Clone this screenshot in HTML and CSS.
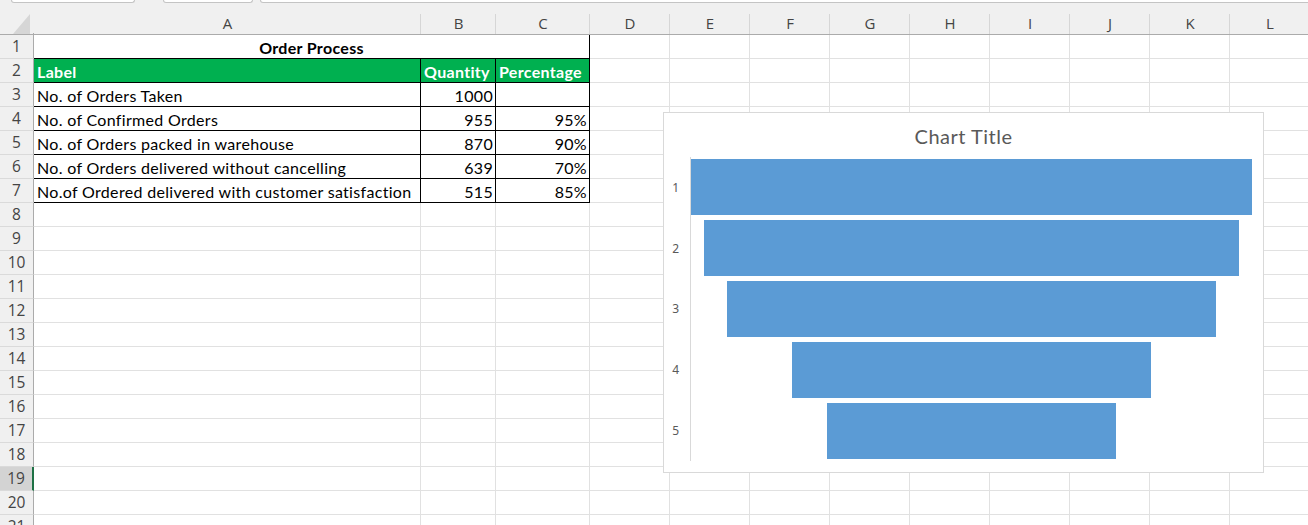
FILE: index.html
```html
<!DOCTYPE html>
<html>
<head>
<meta charset="utf-8">
<link rel="stylesheet" href="styles.css">
</head>
<body>
<div class="topbar">
  <div class="box b1"></div>
  <div class="box b2"></div>
  <div class="box b3"></div>
</div>
<div class="sheet">
  <div class="row hdr">
    <div class="hc corner"><svg class="tri" width="18" height="20" viewBox="0 0 18 20"><polygon points="17,0 17,20 0,20" fill="#d6d6d6"/></svg></div>
    <div class="hc">A</div><div class="hc">B</div><div class="hc">C</div><div class="hc">D</div>
    <div class="hc">E</div><div class="hc">F</div><div class="hc">G</div><div class="hc">H</div>
    <div class="hc">I</div><div class="hc">J</div><div class="hc">K</div><div class="hc">L</div>
  </div>
  <div class="row">
    <div class="rh">1</div>
    <div class="c t title">Order Process</div>
    <div class="c"></div><div class="c"></div><div class="c"></div><div class="c"></div><div class="c"></div><div class="c"></div><div class="c"></div><div class="c"></div><div class="c"></div>
  </div>
  <div class="row">
    <div class="rh">2</div>
    <div class="c t g">Label</div><div class="c t g">Quantity</div><div class="c t g">Percentage</div>
    <div class="c"></div><div class="c"></div><div class="c"></div><div class="c"></div><div class="c"></div><div class="c"></div><div class="c"></div><div class="c"></div><div class="c"></div>
  </div>
  <div class="row">
    <div class="rh">3</div>
    <div class="c t">No. of Orders Taken</div><div class="c t n">1000</div><div class="c t n"></div>
    <div class="c"></div><div class="c"></div><div class="c"></div><div class="c"></div><div class="c"></div><div class="c"></div><div class="c"></div><div class="c"></div><div class="c"></div>
  </div>
  <div class="row">
    <div class="rh">4</div>
    <div class="c t">No. of Confirmed Orders</div><div class="c t n">955</div><div class="c t n">95%</div>
    <div class="c"></div><div class="c"></div><div class="c"></div><div class="c"></div><div class="c"></div><div class="c"></div><div class="c"></div><div class="c"></div><div class="c"></div>
  </div>
  <div class="row">
    <div class="rh">5</div>
    <div class="c t">No. of Orders packed in warehouse</div><div class="c t n">870</div><div class="c t n">90%</div>
    <div class="c"></div><div class="c"></div><div class="c"></div><div class="c"></div><div class="c"></div><div class="c"></div><div class="c"></div><div class="c"></div><div class="c"></div>
  </div>
  <div class="row">
    <div class="rh">6</div>
    <div class="c t">No. of Orders delivered without cancelling</div><div class="c t n">639</div><div class="c t n">70%</div>
    <div class="c"></div><div class="c"></div><div class="c"></div><div class="c"></div><div class="c"></div><div class="c"></div><div class="c"></div><div class="c"></div><div class="c"></div>
  </div>
  <div class="row">
    <div class="rh">7</div>
    <div class="c t">No.of Ordered delivered with customer satisfaction</div><div class="c t n">515</div><div class="c t n">85%</div>
    <div class="c"></div><div class="c"></div><div class="c"></div><div class="c"></div><div class="c"></div><div class="c"></div><div class="c"></div><div class="c"></div><div class="c"></div>
  </div>
  <div class="row"><div class="rh">8</div><div class="c"></div><div class="c"></div><div class="c"></div><div class="c"></div><div class="c"></div><div class="c"></div><div class="c"></div><div class="c"></div><div class="c"></div><div class="c"></div><div class="c"></div><div class="c"></div></div>
  <div class="row"><div class="rh">9</div><div class="c"></div><div class="c"></div><div class="c"></div><div class="c"></div><div class="c"></div><div class="c"></div><div class="c"></div><div class="c"></div><div class="c"></div><div class="c"></div><div class="c"></div><div class="c"></div></div>
  <div class="row"><div class="rh">10</div><div class="c"></div><div class="c"></div><div class="c"></div><div class="c"></div><div class="c"></div><div class="c"></div><div class="c"></div><div class="c"></div><div class="c"></div><div class="c"></div><div class="c"></div><div class="c"></div></div>
  <div class="row"><div class="rh">11</div><div class="c"></div><div class="c"></div><div class="c"></div><div class="c"></div><div class="c"></div><div class="c"></div><div class="c"></div><div class="c"></div><div class="c"></div><div class="c"></div><div class="c"></div><div class="c"></div></div>
  <div class="row"><div class="rh">12</div><div class="c"></div><div class="c"></div><div class="c"></div><div class="c"></div><div class="c"></div><div class="c"></div><div class="c"></div><div class="c"></div><div class="c"></div><div class="c"></div><div class="c"></div><div class="c"></div></div>
  <div class="row"><div class="rh">13</div><div class="c"></div><div class="c"></div><div class="c"></div><div class="c"></div><div class="c"></div><div class="c"></div><div class="c"></div><div class="c"></div><div class="c"></div><div class="c"></div><div class="c"></div><div class="c"></div></div>
  <div class="row"><div class="rh">14</div><div class="c"></div><div class="c"></div><div class="c"></div><div class="c"></div><div class="c"></div><div class="c"></div><div class="c"></div><div class="c"></div><div class="c"></div><div class="c"></div><div class="c"></div><div class="c"></div></div>
  <div class="row"><div class="rh">15</div><div class="c"></div><div class="c"></div><div class="c"></div><div class="c"></div><div class="c"></div><div class="c"></div><div class="c"></div><div class="c"></div><div class="c"></div><div class="c"></div><div class="c"></div><div class="c"></div></div>
  <div class="row"><div class="rh">16</div><div class="c"></div><div class="c"></div><div class="c"></div><div class="c"></div><div class="c"></div><div class="c"></div><div class="c"></div><div class="c"></div><div class="c"></div><div class="c"></div><div class="c"></div><div class="c"></div></div>
  <div class="row"><div class="rh">17</div><div class="c"></div><div class="c"></div><div class="c"></div><div class="c"></div><div class="c"></div><div class="c"></div><div class="c"></div><div class="c"></div><div class="c"></div><div class="c"></div><div class="c"></div><div class="c"></div></div>
  <div class="row"><div class="rh">18</div><div class="c"></div><div class="c"></div><div class="c"></div><div class="c"></div><div class="c"></div><div class="c"></div><div class="c"></div><div class="c"></div><div class="c"></div><div class="c"></div><div class="c"></div><div class="c"></div></div>
  <div class="row"><div class="rh sel">19</div><div class="c"></div><div class="c"></div><div class="c"></div><div class="c"></div><div class="c"></div><div class="c"></div><div class="c"></div><div class="c"></div><div class="c"></div><div class="c"></div><div class="c"></div><div class="c"></div></div>
  <div class="row"><div class="rh">20</div><div class="c"></div><div class="c"></div><div class="c"></div><div class="c"></div><div class="c"></div><div class="c"></div><div class="c"></div><div class="c"></div><div class="c"></div><div class="c"></div><div class="c"></div><div class="c"></div></div>
  <div class="row"><div class="rh">21</div><div class="c"></div><div class="c"></div><div class="c"></div><div class="c"></div><div class="c"></div><div class="c"></div><div class="c"></div><div class="c"></div><div class="c"></div><div class="c"></div><div class="c"></div><div class="c"></div></div>
</div>

<div class="chart">
  <div class="ctitle">Chart Title</div>
  <div class="plot">
    <div class="labels">
      <div class="lab">1</div><div class="lab">2</div><div class="lab">3</div><div class="lab">4</div><div class="lab">5</div>
    </div>
    <div class="bars">
      <div class="band"><div class="bar" style="width:100%"></div></div>
      <div class="band"><div class="bar" style="width:95.5%"></div></div>
      <div class="band"><div class="bar" style="width:87%"></div></div>
      <div class="band"><div class="bar" style="width:63.9%"></div></div>
      <div class="band"><div class="bar" style="width:51.5%"></div></div>
    </div>
  </div>
</div>
</body>
</html>
```
FILE: styles.css
```css
html, body {
  margin: 0;
  padding: 0;
}
body {
  position: relative;
  width: 1308px;
  height: 525px;
  overflow: hidden;
  background: #fff;
  font-family: Lato, "Liberation Sans", sans-serif;
}

/* top strip (bottom edges of the ribbon boxes) */
.topbar {
  height: 3px;
  background: #f0f0f0;
  display: flex;
  padding-left: 11px;
  overflow: hidden;
}
.box {
  height: 2px;
  background: #fff;
  border: 1px solid #c4c4c4;
  border-top: none;
  border-radius: 0 0 4px 4px;
  flex-shrink: 0;
}
.b1 { width: 122px; }
.b2 { width: 88px; margin-left: 28px; }
.b3 { width: 1100px; margin-left: 7px; }

/* grid */
.row {
  display: grid;
  grid-template-columns: 34px 387px 75px 94px 80px repeat(8, 80px);
  height: 24px;
}
.row.hdr {
  height: 32px;
}
.hc {
  position: relative;
  background: #f0f0f0;
  border-bottom: 1px solid #ababab;
  box-sizing: border-box;
  display: flex;
  justify-content: center;
  align-items: center;
  padding-top: 8px;
  font-family: "Open Sans", "Noto Sans", sans-serif;
  font-size: 15px;
  color: #444;
}
.hc::after {
  content: "";
  position: absolute;
  right: 0;
  top: 11px;
  bottom: 0;
  width: 1px;
  background: #d6d6d6;
}
.corner::after {
  background: #ababab;
  top: 30px;
}
.tri {
  position: absolute;
  left: 13px;
  top: 11px;
}

.rh {
  background: #f0f0f0;
  border-right: 1px solid #ababab;
  border-bottom: 1px solid #dadada;
  box-sizing: border-box;
  text-align: center;
  line-height: 23px;
  font-family: "Open Sans", "Noto Sans", sans-serif;
  font-size: 15.5px;
  color: #444;
}
.rh.sel {
  background: #d3d3d3;
  border-right: 2px solid #1e7145;
}

.c {
  border-right: 1px solid #e1e1e1;
  border-bottom: 1px solid #e1e1e1;
  box-sizing: border-box;
  padding: 1px 3px 0;
  font-size: 16px;
  letter-spacing: 0.32px;
  line-height: 23px;
  color: #000;
  white-space: nowrap;
  overflow: hidden;
}
.c.t {
  border-right-color: #000;
  border-bottom-color: #000;
}
.c.title {
  grid-column: span 3;
  text-align: center;
  font-weight: 700;
}
.c.g {
  background: #00b050;
  color: #fff;
  font-weight: 700;
}
.c.n {
  text-align: right;
  padding-right: 2px;
}

/* chart (floating object over the sheet) */
.chart {
  position: absolute;
  left: 663px;
  top: 112px;
  width: 601px;
  height: 361px;
  box-sizing: border-box;
  border: 1px solid #d9d9d9;
  background: #fff;
  padding: 11px 10px 11px 0;
}
.ctitle {
  height: 24px;
  line-height: 24px;
  margin-bottom: 9px;
  text-align: center;
  font-size: 20px;
  letter-spacing: 0.5px;
  color: #595959;
  padding-left: 10px;
}
.plot {
  display: flex;
  height: 304px;
}
.labels {
  width: 26px;
  display: flex;
  flex-direction: column;
}
.lab {
  flex: 1;
  display: flex;
  align-items: center;
  justify-content: flex-end;
  padding-right: 11px;
  font-family: "Noto Sans", sans-serif;
  font-size: 12px;
  color: #595959;
}
.bars {
  width: 561px;
  border-left: 1px solid #d9d9d9;
  display: flex;
  flex-direction: column;
}
.band {
  flex: 1;
  display: flex;
  align-items: center;
  justify-content: center;
}
.bar {
  height: 56px;
  background: #5b9bd5;
}
```
